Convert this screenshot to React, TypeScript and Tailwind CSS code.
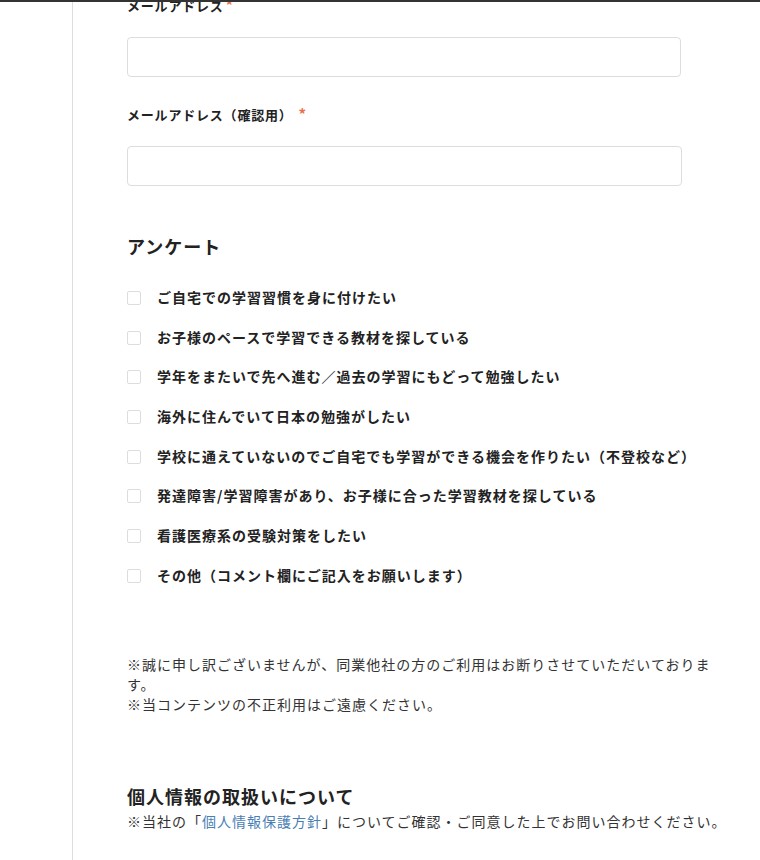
import React from "react";

const items = [
  "ご自宅での学習習慣を身に付けたい",
  "お子様のペースで学習できる教材を探している",
  "学年をまたいで先へ進む／過去の学習にもどって勉強したい",
  "海外に住んでいて日本の勉強がしたい",
  "学校に通えていないのでご自宅でも学習ができる機会を作りたい（不登校など）",
  "発達障害/学習障害があり、お子様に合った学習教材を探している",
  "看護医療系の受験対策をしたい",
  "その他（コメント欄にご記入をお願いします）",
];

export default function App() {
  return (
    <div
      className="min-h-[860px] h-[860px] overflow-hidden bg-white border-t-2 border-[#333333] text-[#333333]"
      style={{ fontFamily: '"Noto Sans CJK JP", "Noto Sans", sans-serif' }}
    >
      <div className="flex h-full">
        <div className="w-[72px] shrink-0" />
        <div className="border-l border-[#dddddd] pl-[54px] flex-1 h-full">
          <div className="w-[594px] -mt-[6px] flex flex-col">
            <div className="h-[20px] text-[13px] leading-[20px] font-bold tracking-[0.8px] text-[#222]">
              メールアドレス<span className="ml-[2px] text-[15px] leading-none text-[#e8704a]">*</span>
            </div>
            <div className="mt-[21px] w-[554px] h-[40px] border border-[#dddddd] rounded-[4px] bg-white" />
            <div className="mt-[28px] h-[20px] text-[13px] leading-[20px] font-bold tracking-[0.8px] text-[#222]">
              メールアドレス（確認用）<span className="ml-[6px] text-[15px] leading-none text-[#e8704a]">*</span>
            </div>
            <div className="mt-[21px] w-[555px] h-[40px] border border-[#dddddd] rounded-[4px] bg-white" />
            <div className="mt-[47px] text-[18px] leading-[26px] font-bold tracking-[1px] text-[#222]">
              アンケート
            </div>
            <div className="mt-[28px] flex flex-col gap-[19.7px]">
              {items.map((t) => (
                <label key={t} className="flex items-center h-[20px]">
                  <span className="w-[14px] h-[14px] border border-[#dddddd] rounded-[2px] bg-white shrink-0 mt-[2px]" />
                  <span className="ml-[16px] text-[14px] leading-[20px] font-bold tracking-[1px] text-[#222] whitespace-nowrap">
                    {t}
                  </span>
                </label>
              ))}
            </div>
            <div className="mt-[69px] text-[14px] leading-[20px] tracking-[1px] text-[#333]">
              <p>※誠に申し訳ございませんが、同業他社の方のご利用はお断りさせていただいております。</p>
              <p>※当コンテンツの不正利用はご遠慮ください。</p>
            </div>
            <div className="mt-[69px] text-[18px] leading-[26px] font-bold tracking-[1px] text-[#222]">
              個人情報の取扱いについて
            </div>
            <div className="mt-[2px] text-[14px] leading-[20px] tracking-[1px] text-[#333] whitespace-nowrap">
              ※当社の「<a className="text-[#4a7fb5]">個人情報保護方針</a>」についてご確認・ご同意した上でお問い合わせください。
            </div>
          </div>
        </div>
      </div>
    </div>
  );
}
